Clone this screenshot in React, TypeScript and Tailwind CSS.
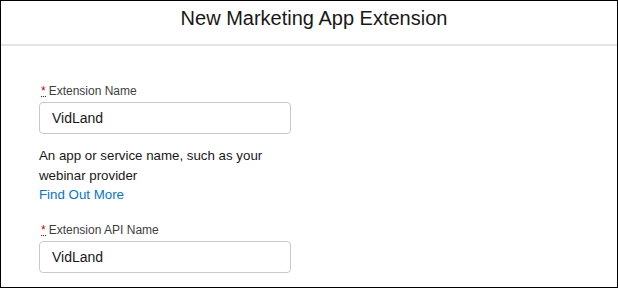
export default function App() {
  return (
    <div className="w-[618px] h-[288px] box-border border border-black bg-white font-['Liberation_Sans',Arial,sans-serif] overflow-hidden">
      {/* header */}
      <div className="h-[45px] box-border border-b-2 border-[#e5e5e5] pl-[10px] flex justify-center">
        <h1 className="mt-[5px] text-[20px] leading-[24px] text-[#181818]">New Marketing App Extension</h1>
      </div>

      <div className="pl-[38px] pt-[36px]">
        <Field label="Extension Name" value="VidLand" />
        <div className="mt-[12px] w-[250px] text-[13.3px] leading-[19.5px] text-[#181818]">
          An app or service name, such as your webinar provider
          <div>
            <a href="#" className="text-[#0176d3]">Find Out More</a>
          </div>
        </div>
        <div className="mt-[16px]">
          <Field label="Extension API Name" value="VidLand" />
        </div>
      </div>
    </div>
  )
}

function Field({ label, value }: { label: string; value: string }) {
  return (
    <div>
      <label className="flex items-baseline text-[12px] leading-[18px] text-[#3e3e3c]">
        <abbr
          title="required"
          className="ml-[2px] mr-[3px] text-[#ba0517] no-underline border-b border-dotted border-[#ba0517] leading-[10px]"
        >
          *
        </abbr>
        {label}
      </label>
      <input
        readOnly
        value={value}
        className="mt-[2px] block w-[252px] h-[32px] box-border rounded-[4px] border border-[#c9c9c9] bg-white px-[12px] text-[14px] text-[#181818] outline-none"
      />
    </div>
  )
}
